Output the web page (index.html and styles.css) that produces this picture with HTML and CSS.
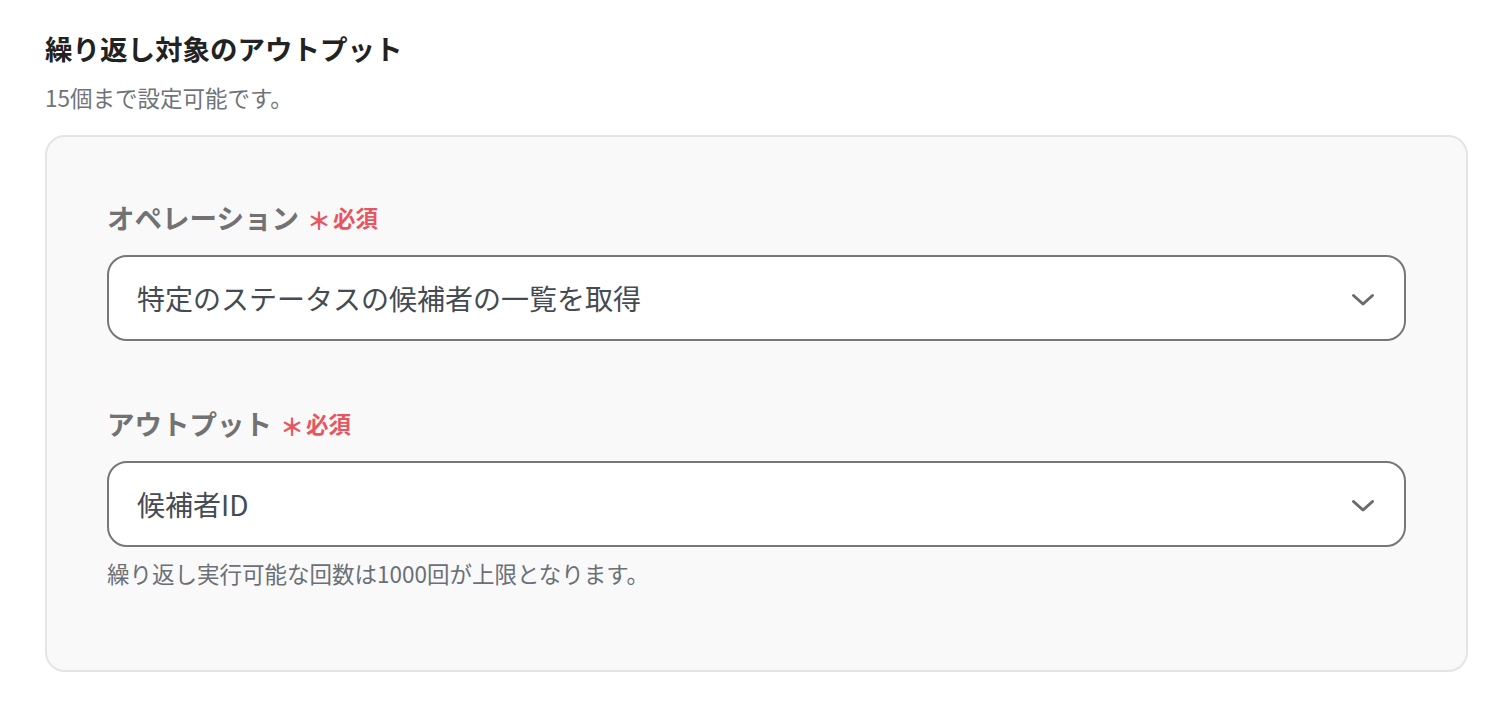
FILE: index.html
```html
<!DOCTYPE html>
<html lang="ja">
<head>
<meta charset="utf-8">
<title>繰り返し対象のアウトプット</title>
<link rel="stylesheet" href="styles.css">
</head>
<body>
<div class="page">
  <h2 class="title">繰り返し対象のアウトプット</h2>
  <p class="subtitle">15個まで設定可能です。</p>
  <div class="panel">
    <div class="field">
      <div class="label">オペレーション<span class="req"><span class="ast">＊</span>必須</span></div>
      <div class="select">
        <span class="value">特定のステータスの候補者の一覧を取得</span>
        <svg class="chev" width="24" height="14" viewBox="0 0 24 14"><path d="M2.5 2.5 L12 11 L21.5 2.5" fill="none" stroke="#6b6b6b" stroke-width="3" stroke-linecap="round" stroke-linejoin="round"/></svg>
      </div>
    </div>
    <div class="field">
      <div class="label">アウトプット<span class="req"><span class="ast">＊</span>必須</span></div>
      <div class="select">
        <span class="value">候補者ID</span>
        <svg class="chev" width="24" height="14" viewBox="0 0 24 14"><path d="M2.5 2.5 L12 11 L21.5 2.5" fill="none" stroke="#6b6b6b" stroke-width="3" stroke-linecap="round" stroke-linejoin="round"/></svg>
      </div>
      <p class="help">繰り返し実行可能な回数は1000回が上限となります。</p>
    </div>
  </div>
</div>
</body>
</html>
```

FILE: styles.css
```css
* { box-sizing: border-box; }
html, body { margin: 0; padding: 0; background: #ffffff; }
body {
  font-family: "Noto Sans CJK JP", "Noto Sans", sans-serif;
  color: #222;
}
.page {
  padding: 28px 36px 0 45px;
}
.title {
  margin: 0;
  font-size: 27.5px;
  line-height: 40px;
  font-weight: 700;
  color: #222222;
}
.subtitle {
  margin: 13px 0 0;
  font-size: 22.5px;
  line-height: 32px;
  color: #6f747a;
}
.panel {
  margin-top: 22px;
  width: 1423px;
  background: #f9f9f9;
  border: 2px solid #e4e4e4;
  border-radius: 20px;
  padding: 60px 60px 81px 60px;
  display: flex;
  flex-direction: column;
  gap: 62px;
}
.field { display: flex; flex-direction: column; }
.label {
  font-size: 27.5px;
  line-height: 40px;
  font-weight: 700;
  color: #727272;
  display: flex;
  align-items: center;
}
.req {
  margin-left: 8px;
  font-size: 22.5px;
  font-weight: 700;
  color: #e8555f;
  display: inline-flex;
  align-items: center;
}
.ast {
  font-size: 24px;
  margin-right: 2px;
  position: relative;
  top: 3px;
}
.select {
  margin-top: 18px;
  height: 86px;
  background: #ffffff;
  border: 2px solid #777777;
  border-radius: 20px;
  padding: 0 28px 0 28px;
  display: flex;
  align-items: center;
  justify-content: space-between;
}
.value {
  font-size: 28px;
  color: #454b53;
  line-height: 40px;
}
.chev { flex: none; position: relative; top: 2px; left: -1px; }
.help {
  margin: 10px 0 0;
  font-size: 22.5px;
  line-height: 32px;
  color: #6b7077;
}
```
